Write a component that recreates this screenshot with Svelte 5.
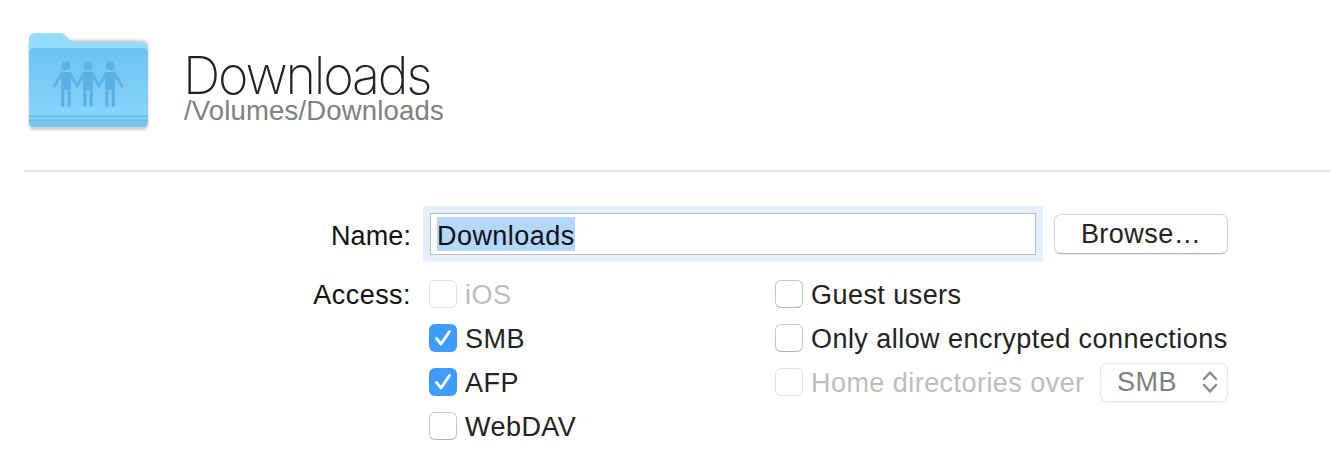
<script lang="ts">
    type Option = { label: string; checked?: boolean; disabled?: boolean };

    const leftOptions: Option[] = [
        { label: "iOS", disabled: true },
        { label: "SMB", checked: true },
        { label: "AFP", checked: true },
        { label: "WebDAV" }
    ];

    const rightOptions: Option[] = [
        { label: "Guest users" },
        { label: "Only allow encrypted connections" }
    ];

    const figures = [0, 22, 44];
</script>

{#snippet checkbox(option: Option)}
    <span class="check" class:checked={option.checked} class:disabled={option.disabled}>
        {#if option.checked}
            <svg viewBox="0 0 28 28" width="28" height="28">
                <path d="M7.5 14.5 L12 20 L20.5 7.5" fill="none" stroke="#fff" stroke-width="2.8" stroke-linecap="round" stroke-linejoin="round" />
            </svg>
        {/if}
    </span>
{/snippet}

<div class="page">
    <header class="head">
        <svg class="folder" viewBox="0 0 130 110" width="130" height="110">
            <defs>
                <linearGradient id="front" x1="0" y1="0" x2="0" y2="1">
                    <stop offset="0" stop-color="#6cc3f2" />
                    <stop offset="1" stop-color="#8cd6fc" />
                </linearGradient>
                <filter id="shadow" x="-10%" y="-10%" width="120%" height="120%">
                    <feGaussianBlur stdDeviation="1.6" />
                </filter>
            </defs>
            <rect x="5" y="10" width="119" height="90" rx="5" fill="#000" opacity="0.2" filter="url(#shadow)" />
            <path d="M5 9 Q5 3 11 3 L36 3 Q40 3 42 6 L46 10 Q48 12 52 12 L119 12 Q124 12 124 17 L124 40 L5 40 Z" fill="#95dcff" />
            <path d="M5 23 Q5 18 10 18 L119 18 Q124 18 124 23 L124 92 Q124 97 119 97 L10 97 Q5 97 5 92 Z" fill="url(#front)" />
            <path d="M5 84 H124 V92 Q124 97 119 97 L10 97 Q5 97 5 92 Z" fill="#72c6f3" />
            <path d="M5 84.5 H124 M5 88.5 H124" stroke="#8cd6fa" stroke-width="1" />
            <path d="M5 86 H124 M5 90.5 H124" stroke="#62b8e6" stroke-width="1" />
            {#each figures as dx}
                <g transform="translate({dx} 0)" fill="#5cb2e3">
                    <circle cx="42" cy="36" r="4.6" />
                    <path d="M37 42 H47 V60 H46.8 V75.4 Q46.8 77 45.2 77 Q43.6 77 43.6 75.4 V60 H40.4 V75.4 Q40.4 77 38.8 77 Q37.2 77 37.2 75.4 V60 H37 Z" />
                </g>
            {/each}
            <path d="M30.5 56 L38 43 M53 56 L46 43 M53 56 L60 43 M75 56 L68 43 M75 56 L82 43 M98 56 L90 43" fill="none" stroke="#5cb2e3" stroke-width="2.8" stroke-linecap="round" />
        </svg>
        <div class="titles">
            <h1>Downloads</h1>
            <p>/Volumes/Downloads</p>
        </div>
    </header>

    <hr />

    <div class="form">
        <span class="label name-label">Name:</span>
        <div class="name-field">
            <div class="focus-ring">
                <div class="input"><span class="selection">Downloads</span></div>
            </div>
            <button class="browse">Browse…</button>
        </div>

        <span class="label access-label">Access:</span>
        <div class="options">
            <div class="col left">
                {#each leftOptions as option}
                    <div class="option" class:off={option.disabled}>
                        {@render checkbox(option)}
                        <span class="text">{option.label}</span>
                    </div>
                {/each}
            </div>
            <div class="col right">
                {#each rightOptions as option}
                    <div class="option">
                        {@render checkbox(option)}
                        <span class="text">{option.label}</span>
                    </div>
                {/each}
                <div class="option off">
                    {@render checkbox({ label: "Home directories over", disabled: true })}
                    <span class="text">Home directories over</span>
                    <div class="select">
                        <span>SMB</span>
                        <svg viewBox="0 0 16 26" width="16" height="26">
                            <path d="M2 10 L8 3.5 L14 10 M2 16 L8 22.5 L14 16" fill="none" stroke="#8a8a8a" stroke-width="2.4" stroke-linecap="round" stroke-linejoin="round" />
                        </svg>
                    </div>
                </div>
            </div>
        </div>
    </div>
</div>

<style>
    :global(body) {
        background: #fff;
    }

    .page {
        width: 1330px;
        height: 474px;
        overflow: hidden;
        font-family: "Liberation Sans", Arial, sans-serif;
        font-size: 27px;
        letter-spacing: 0.45px;
        color: #222;
    }

    .head {
        display: flex;
        height: 170px;
        box-sizing: border-box;
        padding: 30px 0 0 24px;
    }

    .folder {
        flex: none;
    }

    .titles {
        margin-left: 29px;
        padding-top: 22px;
    }

    h1 {
        margin: 0;
        font-family: Inter, sans-serif;
        font-weight: 200;
        font-size: 52px;
        line-height: 48px;
        letter-spacing: -2.2px;
        color: #222;
    }

    .titles p {
        margin: 0 0 0 1px;
        font-size: 27.5px;
        line-height: 22px;
        letter-spacing: 0.17px;
        color: #808080;
    }

    hr {
        margin: 0 0 0 24px;
        border: 0;
        height: 2px;
        background: #e4e4e4;
    }

    .form {
        display: grid;
        grid-template-columns: 411px 1fr;
        column-gap: 12px;
        row-gap: 10px;
        margin-top: 34px;
    }

    .label {
        text-align: right;
        color: #111;
    }

    .name-label {
        line-height: 60px;
        height: 56px;
        letter-spacing: 0.1px;
    }

    .access-label {
        line-height: 46px;
    }

    .name-field {
        display: flex;
        align-items: center;
        gap: 11px;
    }

    .focus-ring {
        width: 620px;
        height: 56px;
        box-sizing: border-box;
        padding: 7px;
        background: #e2f0ff;
    }

    .input {
        height: 42px;
        box-sizing: border-box;
        border: 1.5px solid #bdbdbd;
        background: #fff;
        padding: 3px 0 0 6px;
        color: #111;
    }

    .selection {
        display: inline-block;
        height: 34px;
        line-height: 38px;
        background: #b3d7ff;
    }

    .browse {
        width: 174px;
        height: 40px;
        margin: 0;
        padding: 0;
        border: 1px solid #d4d4d4;
        border-bottom-color: #b4b4b4;
        border-radius: 7px;
        background: #fff;
        box-shadow: 0 1px 1px rgba(0, 0, 0, 0.08);
        font: inherit;
        letter-spacing: 0.45px;
        color: #222;
    }

    .options {
        display: flex;
    }

    .col {
        display: flex;
        flex-direction: column;
    }

    .col.left {
        width: 352px;
        padding-left: 6px;
        box-sizing: border-box;
    }

    .col.right {
        width: 453px;
    }

    .option {
        display: flex;
        align-items: center;
        gap: 8px;
        height: 44px;
        white-space: nowrap;
    }

    .text {
        padding-top: 2px;
    }

    .off {
        color: #bdbdbd;
    }

    .check {
        flex: none;
        width: 28px;
        height: 28px;
        box-sizing: border-box;
        border: 1.5px solid #c6c6c6;
        border-bottom-color: #b2b2b2;
        border-radius: 6px;
        background: #fff;
    }

    .check.disabled {
        border-color: #e2e2e2;
    }

    .check.checked {
        border: 0;
        background: #3f9bfc;
    }

    .check svg {
        display: block;
    }

    .select {
        display: flex;
        align-items: center;
        justify-content: space-between;
        box-sizing: border-box;
        width: 128px;
        height: 39px;
        margin-left: auto;
        padding: 0 9px 0 16px;
        border: 1px solid #e6e6e6;
        border-radius: 7px;
        box-shadow: 0 1px 1px rgba(0, 0, 0, 0.06);
        color: #808080;
    }
</style>
